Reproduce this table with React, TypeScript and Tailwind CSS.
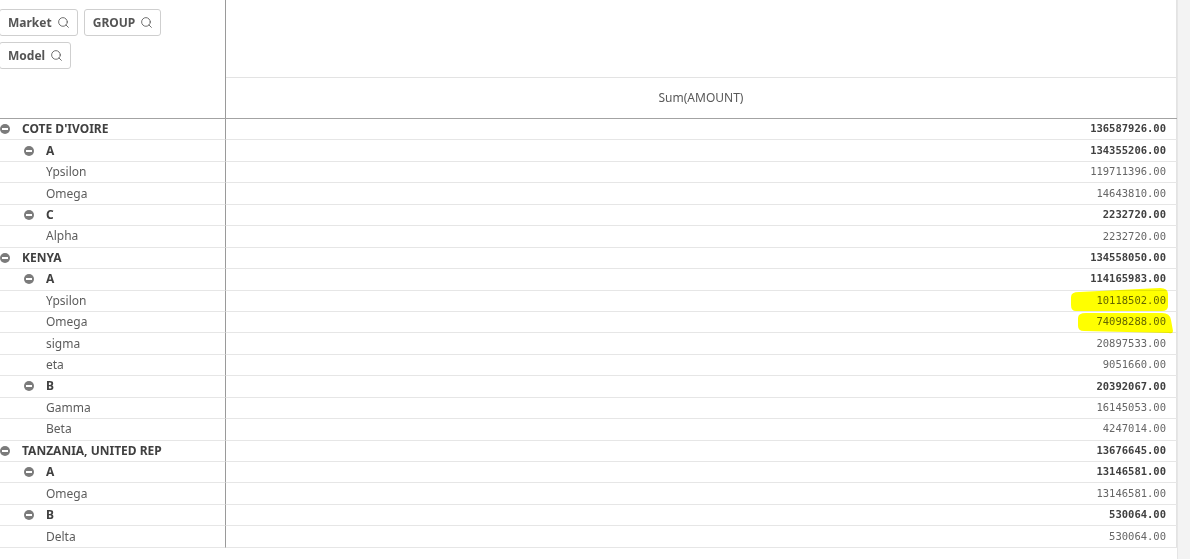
import React from "react";
import { Search } from "lucide-react";

type Row = { level: 0 | 1 | 2; label: string; value: string };

const rows: Row[] = [
  { level: 0, label: "COTE D'IVOIRE", value: "136587926.00" },
  { level: 1, label: "A", value: "134355206.00" },
  { level: 2, label: "Ypsilon", value: "119711396.00" },
  { level: 2, label: "Omega", value: "14643810.00" },
  { level: 1, label: "C", value: "2232720.00" },
  { level: 2, label: "Alpha", value: "2232720.00" },
  { level: 0, label: "KENYA", value: "134558050.00" },
  { level: 1, label: "A", value: "114165983.00" },
  { level: 2, label: "Ypsilon", value: "10118502.00" },
  { level: 2, label: "Omega", value: "74098288.00" },
  { level: 2, label: "sigma", value: "20897533.00" },
  { level: 2, label: "eta", value: "9051660.00" },
  { level: 1, label: "B", value: "20392067.00" },
  { level: 2, label: "Gamma", value: "16145053.00" },
  { level: 2, label: "Beta", value: "4247014.00" },
  { level: 0, label: "TANZANIA, UNITED REP", value: "13676645.00" },
  { level: 1, label: "A", value: "13146581.00" },
  { level: 2, label: "Omega", value: "13146581.00" },
  { level: 1, label: "B", value: "530064.00" },
  { level: 2, label: "Delta", value: "530064.00" },
];

function Collapse() {
  return (
    <span className="flex items-center justify-center w-[10px] h-[10px] rounded-full bg-[#7b7b7b]">
      <span className="block w-[6px] h-[2px] bg-white" />
    </span>
  );
}

function FieldButton({ label }: { label: string }) {
  return (
    <div className="flex items-center gap-[5px] h-[27px] pl-[8px] pr-[7px] border border-[#cfcfcf] rounded-[3px] bg-white text-[12px] font-bold text-[#555555]">
      {label}
      <Search size={13} strokeWidth={1.6} className="text-[#595959]" />
    </div>
  );
}

export default function App() {
  return (
    <div
      className="relative flex w-[1190px] h-[559px] bg-white overflow-hidden"
      style={{ fontFamily: "'Noto Sans', 'Open Sans', sans-serif" }}
    >
      <div className="flex flex-col w-[1177px]">
        {/* header */}
        <div className="flex h-[119px] border-b border-[#a3a3a3]">
          <div className="w-[226px] shrink-0 border-r border-[#9a9a9a] pt-[9px]">
            <div className="flex flex-wrap gap-x-[6px] gap-y-[6px] -ml-[1px] w-[200px]">
              <FieldButton label="Market" />
              <FieldButton label="GROUP" />
              <FieldButton label="Model" />
            </div>
          </div>
          <div className="flex flex-col flex-1 border-r border-[#e3e3e3]">
            <div className="h-[78px] border-b border-[#e3e3e3]" />
            <div className="flex flex-1 items-center justify-center text-[12px] text-[#595959]">
              Sum(AMOUNT)
            </div>
          </div>
        </div>
        {/* body */}
        {rows.map((r, i) => (
          <div key={i} className="flex h-[21.45px]">
            <div className="flex items-center w-[226px] shrink-0 border-r border-[#9a9a9a] border-b border-b-[#e6e6e6] text-[12px]">
              {r.level === 0 && (
                <div className="flex items-center">
                  <Collapse />
                  <span className="ml-[12px] font-bold text-[#404040]">{r.label}</span>
                </div>
              )}
              {r.level === 1 && (
                <div className="flex items-center pl-[24px]">
                  <Collapse />
                  <span className="ml-[12px] font-bold text-[#404040]">{r.label}</span>
                </div>
              )}
              {r.level === 2 && <span className="pl-[46px] text-[#5c5c5c]">{r.label}</span>}
            </div>
            <div
              className={
                "flex flex-1 items-center justify-end pr-[10px] border-b border-[#e6e6e6] border-r border-r-[#e3e3e3] text-[10.5px] " +
                (r.level === 2 ? "text-[#666666]" : "font-bold text-[#404040]")
              }
              style={{ fontFamily: "'DejaVu Sans Mono', 'Liberation Mono', monospace" }}
            >
              {r.value}
            </div>
          </div>
        ))}
      </div>
      <div className="flex-1 bg-[#f3f3f3] border-l border-[#e6e6e6]" />

      {/* marker highlights */}
      <svg
        className="absolute left-0 top-0 mix-blend-multiply pointer-events-none"
        width={1190}
        height={559}
        viewBox="0 0 1190 559"
      >
        <path
          d="M1071 297 Q1071 292 1079 292 L1160 288 Q1168 288 1168 294 L1168 306 Q1168 311 1162 311 L1076 311 Q1071 311 1071 305 Z"
          fill="#ffff00"
        />
        <path
          d="M1078 318 Q1078 313 1086 313 L1162 313 Q1170 313 1171 320 L1173 331 Q1173 334 1169 333 L1084 331 Q1078 331 1078 326 Z"
          fill="#ffff00"
        />
      </svg>
    </div>
  );
}
